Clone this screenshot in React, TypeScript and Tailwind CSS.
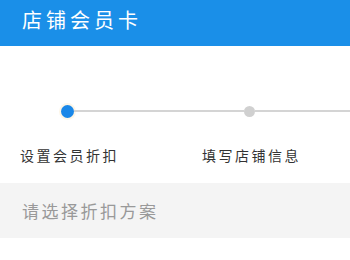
export default function App() {
  return (
    <div className="w-[350px] h-[260px] overflow-hidden bg-white font-['Noto_Sans_CJK_SC','Noto_Sans',sans-serif]">
      <header className="h-[46px] bg-[#1a8fe8] pl-[22px] pt-[6px] text-[20px] leading-[28px] tracking-[4px] text-white">
        店铺会员卡
      </header>

      <div className="mt-[58px] flex h-[14px] items-center pl-[61px]">
        <span className="h-[13px] w-[13px] shrink-0 rounded-full bg-[#1a87e8] ring-2 ring-[#fdf6e8]" />
        <span className="h-[2px] w-[170px] shrink-0 bg-[#d4d4d4]" />
        <span className="h-[11px] w-[11px] shrink-0 rounded-full bg-[#d0d0d0]" />
        <span className="h-[2px] flex-1 bg-[#d4d4d4]" />
      </div>

      <div className="mt-[28px] flex gap-[46px] text-[14px] leading-[18px] tracking-[2.5px] text-[#333]">
        <span className="w-[136px] pl-[3px] text-center">设置会员折扣</span>
        <span className="w-[136px] pl-[3px] text-center">填写店铺信息</span>
      </div>

      <div className="mt-[19px] flex h-[55px] items-center bg-[#f4f4f4] pl-[22px] text-[17px] tracking-[2.5px] text-[#999]">
        请选择折扣方案
      </div>
    </div>
  );
}
